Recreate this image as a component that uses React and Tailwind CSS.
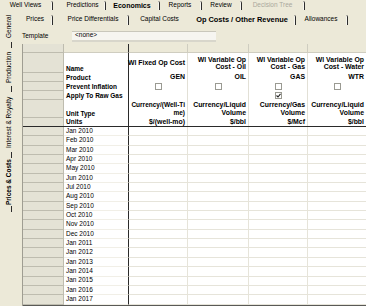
import React from "react";

const topTabs = [
  { label: "Well Views", w: 53 },
  { label: "Predictions", w: 53, pl: 8 },
  { label: "Economics", w: 54, bold: true },
  { label: "Reports", w: 42 },
  { label: "Review", w: 40 },
  { label: "Decision Tree", w: 63, gray: true },
];

const subTabs = [
  { label: "Prices", w: 34, sep: true },
  { label: "Price Differentials", w: 76, sep: true, pl: 6 },
  { label: "Capital Costs", w: 61, sep: false },
  { label: "Op Costs / Other Revenue", w: 106, sep: true, bold: true },
  { label: "Allowances", w: 52, sep: true },
];

const sideTabs = [
  { label: "General", h: 37 },
  { label: "Production", h: 44 },
  { label: "Interest & Royalty", h: 66 },
  { label: "Prices & Costs", h: 54, bold: true },
];

const months = [
  "Jan 2010", "Feb 2010", "Mar 2010", "Apr 2010", "May 2010", "Jun 2010",
  "Jul 2010", "Aug 2010", "Sep 2010", "Oct 2010", "Nov 2010", "Dec 2010",
  "Jan 2011", "Jan 2012", "Jan 2013", "Jan 2014", "Jan 2015", "Jan 2016", "Jan 2017",
];

const cols = [
  { w: 59, name: ["Wl Fixed Op Cost"], product: "GEN", raw: false, unit: ["Currency/(Well-Ti", "me)"], units: "$/(well-mo)", small: true },
  { w: 61, name: ["Wl Variable Op", "Cost - Oil"], product: "OIL", raw: false, unit: ["Currency/Liquid", "Volume"], units: "$/bbl" },
  { w: 59, name: ["Wl Variable Op", "Cost - Gas"], product: "GAS", raw: true, unit: ["Currency/Gas", "Volume"], units: "$/Mcf" },
  { w: 59, name: ["Wl Variable Op", "Cost - Water"], product: "WTR", raw: false, unit: ["Currency/Liquid", "Volume"], units: "$/bbl" },
];

function Check({ checked, show = true }) {
  if (!show) return null;
  return (
    <div className="w-[7px] h-[7px] border border-[#9a9a92] bg-white flex items-center justify-center">
      {checked && (
        <svg width="5" height="5" viewBox="0 0 5 5">
          <path d="M0.5 2.5 L2 4 L4.5 0.8" stroke="#222" strokeWidth="1.1" fill="none" />
        </svg>
      )}
    </div>
  );
}

function HeaderRow({ h, label, render, strip }) {
  return (
    <div className="flex shrink-0" style={{ height: h }}>
      <div className="w-[41px] shrink-0 bg-[#e4e2d5] border-b border-r border-[#bebcaf]" />
      <div
        className={`w-[65px] shrink-0 flex items-end pl-[2px] pb-[1px] font-bold border-r border-[#2a2a2a] ${strip ? "bg-[#ece9d8] border-b border-b-[#cfcdc0]" : "bg-white"}`}
      >
        {label}
      </div>
      {cols.map((c, i) => (
        <div
          key={i}
          className={`shrink-0 flex flex-col justify-center items-end pr-[2px] font-bold text-[6.9px] border-r ${strip ? "bg-[#ece9d8] border-b border-b-[#cfcdc0] border-r-[#cfcdc0]" : "bg-white border-[#e2e0d6]"}`}
          style={{ width: c.w }}
        >
          {render ? render(c) : null}
        </div>
      ))}
      <div className={`flex-1 ${strip ? "bg-[#ece9d8] border-b border-[#cfcdc0]" : "bg-white"}`} />
    </div>
  );
}

export default function App() {
  return (
    <div className="w-[366px] h-[306px] overflow-hidden bg-[#ece9d8] flex flex-col text-black leading-none font-['Liberation_Sans',Arial,sans-serif] text-[6.5px]">
      {/* top tabs */}
      <div className="h-[11px] flex shrink-0">
        {topTabs.map((t, i) => (
          <div key={i} className="shrink-0 flex" style={{ width: t.w }}>
            <div
              className={`flex-1 flex items-center justify-center ${t.bold ? "font-bold text-[7px]" : ""} ${t.gray ? "text-[#aaa89c]" : ""}`}
              style={{ paddingLeft: t.pl || 0 }}
            >
              {t.label}
            </div>
            <div className="w-[2px] h-[9px] mt-[1px] border-r border-[#2c2c2c] bg-white/60 rounded-tr-[2px]" />
          </div>
        ))}
      </div>

      <div className="flex flex-1 min-h-0">
        {/* side tabs */}
        <div className="w-[19px] shrink-0 flex flex-col">
          {sideTabs.map((t, i) => (
            <div key={i} className="shrink-0 flex flex-col items-center" style={{ height: t.h }}>
              <div
                className={`flex-1 flex items-center justify-center [writing-mode:vertical-rl] rotate-180 pl-[1px] ${t.bold ? "font-bold" : ""}`}
              >
                {t.label}
              </div>
              <div className="w-[1px] h-[6px] bg-[#2c2c2c] ml-[4px]" />
            </div>
          ))}
        </div>

        {/* main */}
        <div className="flex-1 flex flex-col min-w-0">
          {/* sub tabs */}
          <div className="h-[17px] flex shrink-0">
            {subTabs.map((t, i) => (
              <div key={i} className="shrink-0 flex" style={{ width: t.w }}>
                <div
                  className={`flex-1 flex items-center justify-center ${t.bold ? "font-bold text-[7.4px]" : ""}`}
                  style={{ paddingLeft: t.pl || 0 }}
                >
                  {t.label}
                </div>
                {t.sep ? (
                  <div className="w-[2px] h-[10px] mt-[4px] border-r border-[#2c2c2c] bg-white/60 rounded-tr-[2px]" />
                ) : null}
              </div>
            ))}
          </div>

          {/* template */}
          <div className="h-[16px] flex items-center shrink-0">
            <div className="w-[53px] pl-[3px]">Template</div>
            <div className="w-[144px] h-[11px] bg-[#f6f5f0] border-t border-[#c9c7bb] border-b-[2px] border-b-[#d8d6cb] flex items-center pl-[3px]">
              &lt;none&gt;
            </div>
          </div>

          {/* grid */}
          <div className="ml-[3px] flex-1 flex flex-col border-l border-[#9f9d92] min-h-0">
            <HeaderRow h={9} strip />
            <HeaderRow
              h={20}
              label="Name"
              render={(c) => c.name.map((n, k) => <div key={k} className="leading-[7.5px] text-right whitespace-nowrap">{n}</div>)}
            />
            <HeaderRow h={9} label="Product" render={(c) => <div>{c.product}</div>} />
            <HeaderRow
              h={9}
              label="Prevent Inflation"
              render={() => (
                <div className="w-full flex justify-center pl-[2px]">
                  <Check />
                </div>
              )}
            />
            <HeaderRow
              h={9}
              label="Apply To Raw Gas"
              render={(c) => (
                <div className="w-full flex justify-center pl-[2px]">
                  <Check checked show={c.raw} />
                </div>
              )}
            />
            <HeaderRow
              h={18}
              label="Unit Type"
              render={(c) =>
                c.unit.map((n, k) => (
                  <div key={k} className={`leading-[8px] text-right whitespace-nowrap ${c.small ? "text-[6.5px]" : ""}`}>
                    {n}
                  </div>
                ))
              }
            />
            <div className="flex shrink-0 h-[9px] border-b border-[#2a2a2a]">
              <div className="w-[41px] shrink-0 bg-[#e4e2d5] border-r border-[#bebcaf]" />
              <div className="w-[65px] shrink-0 flex items-end pl-[2px] pb-[1px] font-bold bg-white border-r border-[#2a2a2a]">Units</div>
              {cols.map((c, i) => (
                <div key={i} className="shrink-0 flex items-center justify-end pr-[2px] font-bold text-[6.9px] bg-white border-r border-[#e2e0d6]" style={{ width: c.w }}>
                  {c.units}
                </div>
              ))}
              <div className="flex-1 bg-white" />
            </div>

            {months.map((m, r) => (
              <div key={r} className="flex shrink-0 h-[9.35px]">
                <div className="w-[41px] shrink-0 bg-[#e4e2d5] border-b border-r border-[#bebcaf]" />
                <div className="w-[65px] shrink-0 flex items-center pl-[2px] bg-white border-r border-[#2a2a2a] border-b border-b-[#f1efe7]">
                  {m}
                </div>
                {cols.map((c, i) => (
                  <div key={i} className="shrink-0 bg-white border-r border-b border-[#e6e4da]" style={{ width: c.w }} />
                ))}
                <div className="flex-1 bg-white border-b border-[#e6e4da]" />
              </div>
            ))}
            <div className="flex-1 bg-[#5a5a56]" />
          </div>
        </div>
      </div>
    </div>
  );
}
